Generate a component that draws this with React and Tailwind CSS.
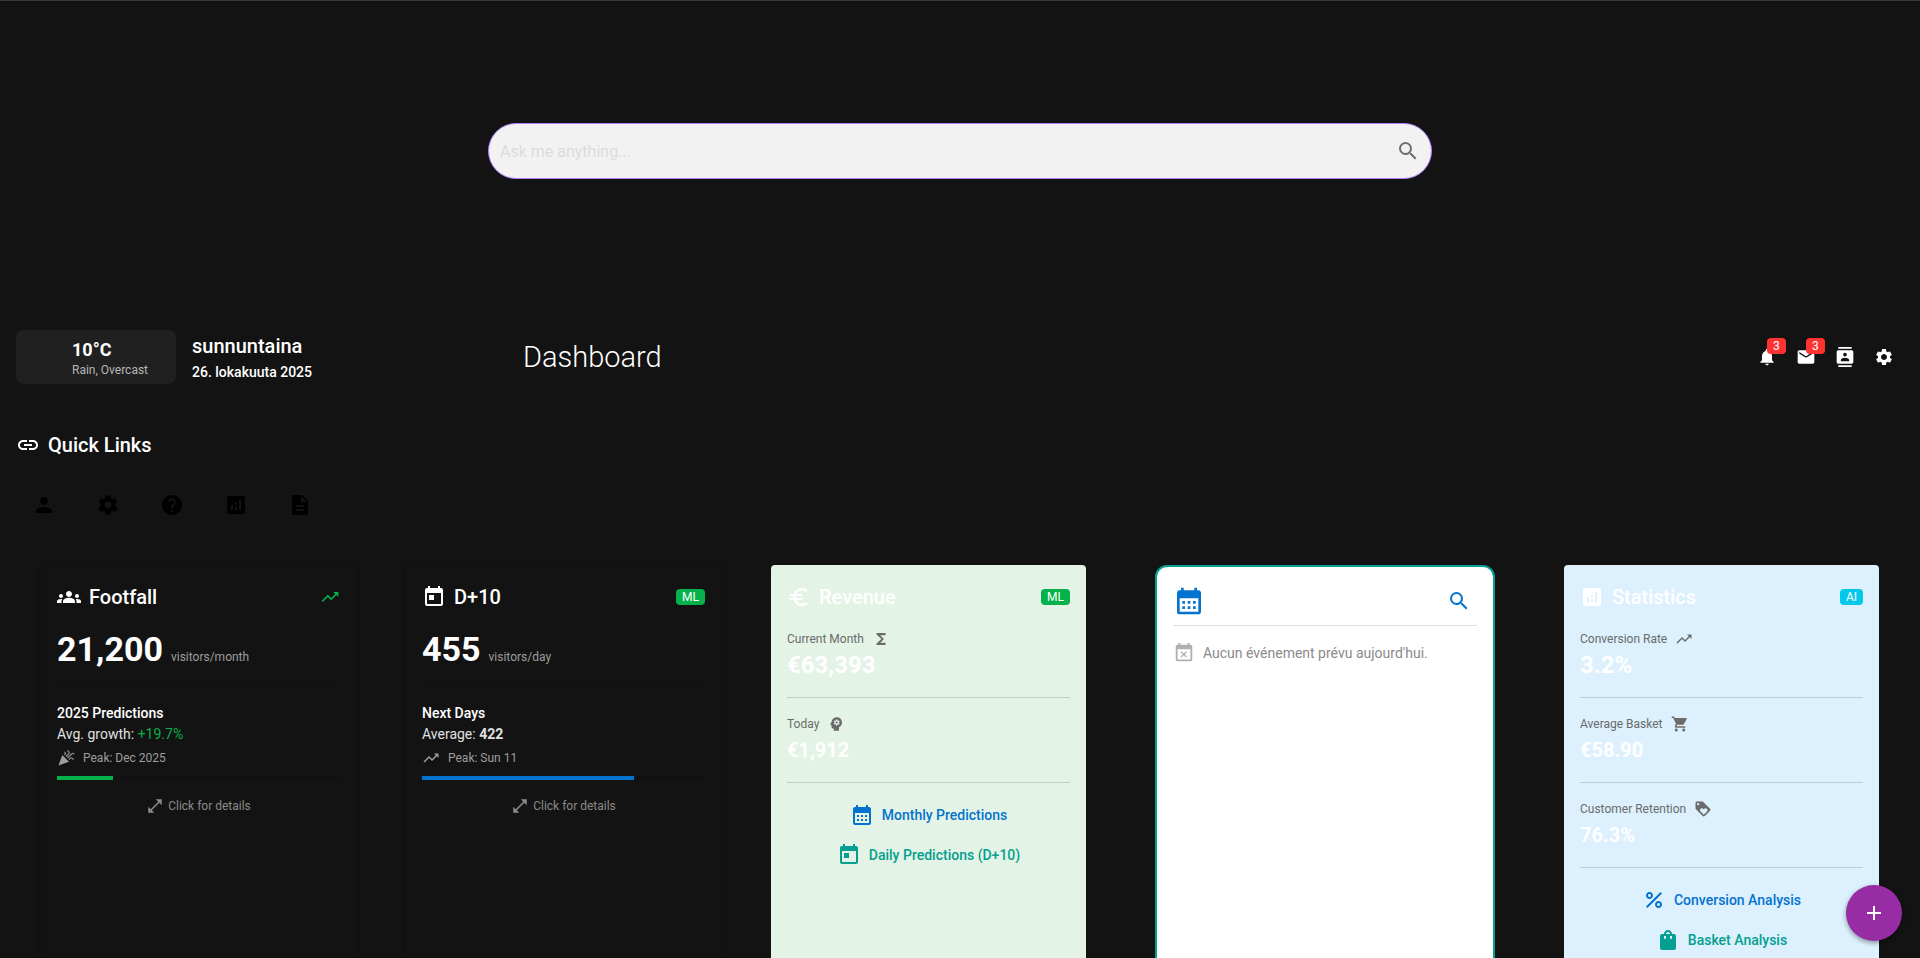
import {
  MdSearch, MdLink, MdPerson, MdSettings, MdHelp, MdAnalytics, MdDescription,
  MdNotifications, MdMail, MdContacts, MdGroups, MdTrendingUp, MdToday, MdEuro,
  MdFunctions, MdPsychology, MdCalendarMonth, MdEventBusy, MdShoppingCart,
  MdLoyalty, MdPercent, MdShoppingBag, MdAdd, MdCelebration, MdOpenInFull,
} from "react-icons/md";

const quickLinks = [
  { label: "Profile", Icon: MdPerson },
  { label: "Settings", Icon: MdSettings },
  { label: "Help", Icon: MdHelp },
  { label: "Analytics", Icon: MdAnalytics },
  { label: "Documents", Icon: MdDescription },
];

const headerActions = [
  { label: "Notifications", Icon: MdNotifications, count: 3 },
  { label: "Messages", Icon: MdMail, count: 3 },
  { label: "Contacts", Icon: MdContacts },
  { label: "Settings", Icon: MdSettings },
];

function Badge({ children, className }) {
  return (
    <span className={`rounded px-1.5 py-0.5 text-xs leading-3 text-white ${className}`}>
      {children}
    </span>
  );
}

function CardTitle({ Icon, title, children }) {
  return (
    <div className="flex h-8 items-center justify-between">
      <h2 className="flex items-center gap-2 text-xl font-medium text-white">
        <Icon className="size-6" />
        {title}
      </h2>
      {children}
    </div>
  );
}

function VisitorCard({ Icon, title, corner, value, unit, heading, line, PeakIcon, peak, progress, barClass }) {
  return (
    <article className="min-h-[550px] w-[315px] shrink-0 rounded p-4 shadow-[0_1px_5px_rgba(0,0,0,0.2),0_2px_2px_rgba(0,0,0,0.14)]">
      <CardTitle Icon={Icon} title={title}>{corner}</CardTitle>
      <p className="mt-4 flex items-baseline gap-2 text-[34px] leading-10 font-bold text-white">
        {value}
        <span className="text-xs font-normal text-[#9e9e9e]">{unit}</span>
      </p>
      <hr className="my-4 border-[#101010]" />
      <h3 className="text-sm leading-[22px] font-medium text-white">{heading}</h3>
      <p className="text-sm leading-5 text-[#e0e0e0]">{line}</p>
      <p className="mt-1 flex items-center gap-2 text-xs leading-5 text-[#9e9e9e]">
        <PeakIcon className="size-[18px]" />
        {peak}
      </p>
      <div className="mt-2 h-1 bg-[#111111]">
        <div className={`h-1 ${barClass}`} style={{ width: `${progress}%` }} />
      </div>
      <button className="mt-4 flex w-full items-center justify-center gap-1 text-xs leading-5 text-[#8a8a8a]">
        <MdOpenInFull className="size-[18px]" />
        Click for details
      </button>
    </article>
  );
}

function Metric({ label, Icon, value, large }) {
  return (
    <div className="mb-4 border-b border-black/15 pb-4">
      <p className="flex items-center gap-2 text-xs leading-5 text-[#6b6b6b]">
        {label}
        <Icon className="size-[18px]" />
      </p>
      <p className={large ? "text-2xl leading-8 font-bold text-white" : "text-xl leading-8 font-bold text-white"}>
        {value}
      </p>
    </div>
  );
}

function ActionLink({ Icon, label, className }) {
  return (
    <a href="#" className={`mb-2 flex h-8 items-center justify-center gap-2 text-sm font-medium ${className}`}>
      <Icon className="size-6" />
      {label}
    </a>
  );
}

export default function App() {
  return (
    <div className="h-screen overflow-hidden border-t border-[#3a3a3a] bg-[#131313] font-[Roboto,sans-serif] text-white">
      <form className="mx-auto mt-[122px] flex h-14 w-[944px] max-w-full items-center rounded-full border border-[#b07cf7] bg-[#f2f2f2] pr-[11px] pl-[11px]">
        <input
          type="text"
          aria-label="Ask me anything"
          placeholder="Ask me anything..."
          className="h-full flex-1 bg-transparent text-base text-[#333333] outline-none placeholder:text-[#dcdcdc]"
        />
        <button type="button" aria-label="Search" className="text-[#6f6f6f]">
          <MdSearch className="size-6" />
        </button>
      </form>

      <header className="mt-[151px] flex h-[54px] items-center px-4">
        <section className="h-full w-40 shrink-0 rounded-lg bg-[#202020] pt-2 pl-14">
          <p className="text-lg leading-6 font-bold">10°C</p>
          <p className="text-xs leading-4 text-[#b5b5b5]">Rain, Overcast</p>
        </section>
        <section className="ml-4 w-[331px] shrink-0 self-end">
          <p className="text-xl leading-7 font-medium">sunnuntaina</p>
          <p className="text-sm leading-6 font-medium">26. lokakuuta 2025</p>
        </section>
        <h1 className="flex-1 text-[29px] leading-10 font-light">Dashboard</h1>
        <nav className="flex gap-[7px] pr-1">
          {headerActions.map(({ label, Icon, count }) => (
            <button key={label} aria-label={label} className="relative grid size-8 place-items-center">
              <Icon className="size-5" />
              {count && (
                <span className="absolute -top-[3px] left-4 rounded bg-[#ff3232] px-1.5 py-0.5 text-xs leading-3">
                  {count}
                </span>
              )}
            </button>
          ))}
        </nav>
      </header>

      <section className="pl-4">
        <h2 className="mt-[45px] flex h-8 items-center gap-2 text-xl font-medium">
          <MdLink className="size-6" />
          Quick Links
        </h2>
        <nav className="mt-5 flex gap-4 pl-1">
          {quickLinks.map(({ label, Icon }) => (
            <button key={label} aria-label={label} className="grid size-12 place-items-center text-black">
              <Icon className="size-6" />
            </button>
          ))}
        </nav>
      </section>

      <main className="mt-9 flex justify-between px-[41px]">
        <div className="flex shrink-0 gap-[50px]">
          <VisitorCard
            Icon={MdGroups}
            title="Footfall"
            corner={<MdTrendingUp className="size-5 text-[#04b14b]" />}
            value="21,200"
            unit="visitors/month"
            heading="2025 Predictions"
            line={<>Avg. growth: <span className="text-[#04b14b]">+19.7%</span></>}
            PeakIcon={MdCelebration}
            peak="Peak: Dec 2025"
            progress={19.7}
            barClass="bg-[#04b14b]"
          />
          <VisitorCard
            Icon={MdToday}
            title="D+10"
            corner={<Badge className="bg-[#04b14b]">ML</Badge>}
            value="455"
            unit="visitors/day"
            heading="Next Days"
            line={<>Average: <strong>422</strong></>}
            PeakIcon={MdTrendingUp}
            peak="Peak: Sun 11"
            progress={75}
            barClass="bg-[#0473cf]"
          />
          <article className="min-h-[550px] w-[315px] shrink-0 rounded bg-[#e3f3e5] p-4">
            <CardTitle Icon={MdEuro} title="Revenue"><Badge className="bg-[#04b14b]">ML</Badge></CardTitle>
            <div className="mt-4">
              <Metric label="Current Month" Icon={MdFunctions} value="€63,393" large />
              <Metric label="Today" Icon={MdPsychology} value="€1,912" />
            </div>
            <ActionLink Icon={MdCalendarMonth} label="Monthly Predictions" className="text-[#0473cf]" />
            <ActionLink Icon={MdToday} label="Daily Predictions (D+10)" className="text-[#049f90]" />
          </article>
        </div>
        <article className="min-h-[550px] w-[340px] shrink-0 rounded-xl border-2 border-[#049f90] bg-white p-4">
          <div className="flex items-center justify-between border-b border-black/12 pb-1.5">
            <MdCalendarMonth className="size-8 text-[#0473cf]" />
            <button aria-label="Search events" className="grid size-9 place-items-center text-[#0473cf]">
              <MdSearch className="size-6" />
            </button>
          </div>
          <p className="mt-4 flex items-center gap-2 text-sm text-[#8a8a8a]">
            <MdEventBusy className="size-[22px] text-[#b0b0b0]" />
            Aucun événement prévu aujourd'hui.
          </p>
        </article>
        <article className="min-h-[550px] w-[315px] shrink-0 rounded bg-[#dcf0fd] p-4">
          <CardTitle Icon={MdAnalytics} title="Statistics"><Badge className="bg-[#04c8ea]">AI</Badge></CardTitle>
          <div className="mt-4">
            <Metric label="Conversion Rate" Icon={MdTrendingUp} value="3.2%" large />
            <Metric label="Average Basket" Icon={MdShoppingCart} value="€58.90" />
            <Metric label="Customer Retention" Icon={MdLoyalty} value="76.3%" />
          </div>
          <ActionLink Icon={MdPercent} label="Conversion Analysis" className="text-[#0473cf]" />
          <ActionLink Icon={MdShoppingBag} label="Basket Analysis" className="text-[#049f90]" />
        </article>
      </main>

      <button
        aria-label="Add"
        className="fixed right-[18px] bottom-[17px] grid size-14 place-items-center rounded-full bg-[#972ca4] text-white shadow-[0_2px_5px_rgba(0,0,0,0.4)]"
      >
        <MdAdd className="size-6" />
      </button>
    </div>
  );
}
